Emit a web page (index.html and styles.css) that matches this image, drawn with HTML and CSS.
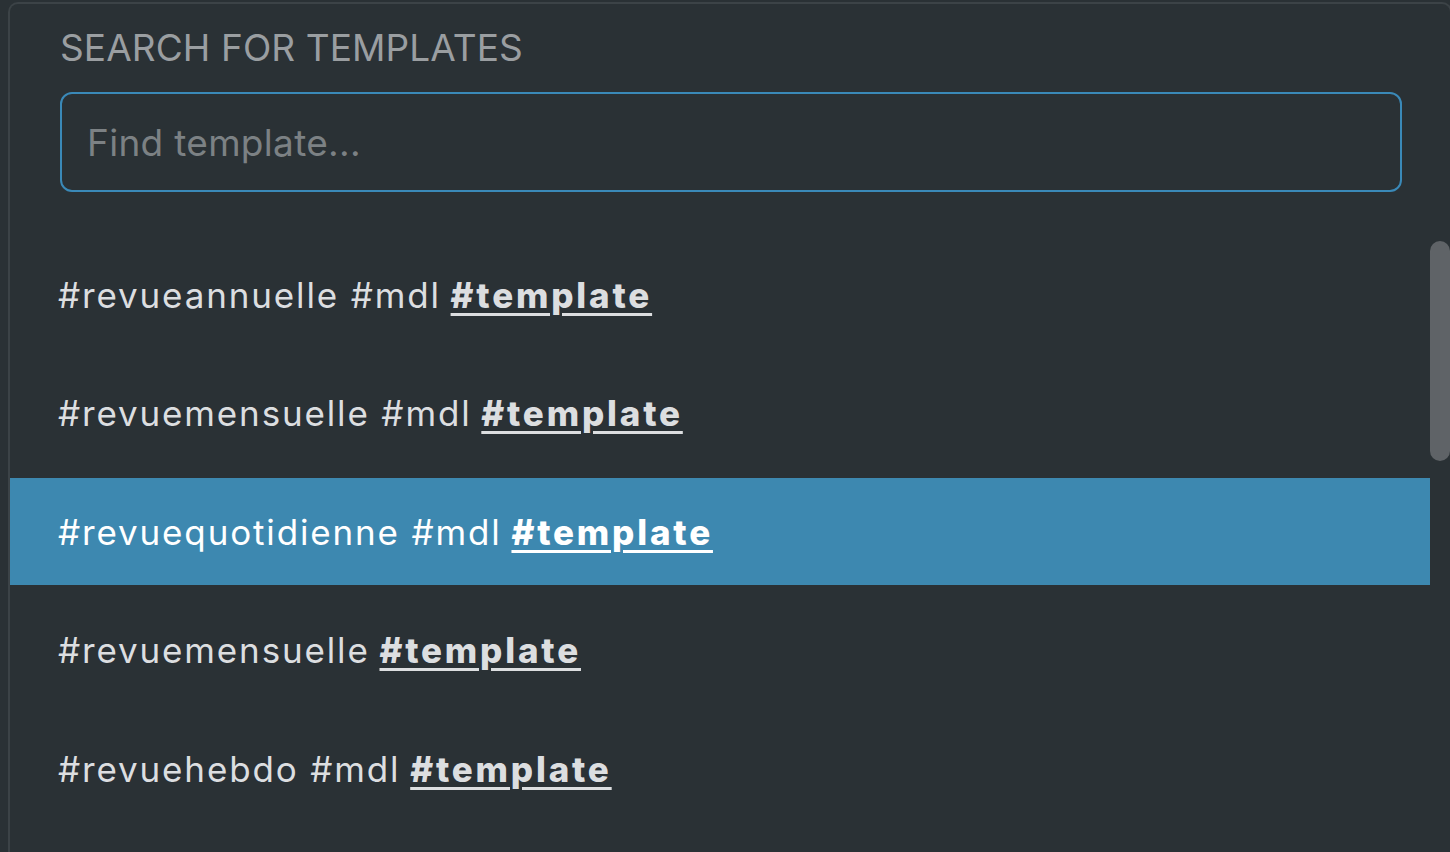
FILE: index.html
```html
<!DOCTYPE html>
<html>
<head>
<meta charset="utf-8">
<link rel="stylesheet" href="styles.css">
</head>
<body>
<div class="panel">
  <div class="header">
    <div class="title">SEARCH FOR TEMPLATES</div>
    <div class="search"><span class="placeholder">Find template...</span></div>
  </div>
  <div class="list">
    <div class="row">#revueannuelle #mdl <b>#template</b></div>
    <div class="row">#revuemensuelle #mdl <b>#template</b></div>
    <div class="row selected">#revuequotidienne #mdl <b>#template</b></div>
    <div class="row">#revuemensuelle <b>#template</b></div>
    <div class="row">#revuehebdo #mdl <b>#template</b></div>
    <div class="thumb"></div>
  </div>
</div>
</body>
</html>
```
FILE: styles.css
```css
html, body {
  margin: 0;
  padding: 0;
  background: #2a3135;
  overflow: hidden;
  height: 100%;
}
body {
  font-family: Inter, "Noto Sans", sans-serif;
}
.panel {
  margin: 2px 0 0 8px;
  width: 1444px;
  height: 900px;
  border: 2px solid #3c4347;
  border-bottom: none;
  border-radius: 10px 10px 0 0;
  background: #2a3135;
  box-sizing: border-box;
}
.header {
  padding: 0 0 0 50px;
}
.title {
  font-size: 37px;
  letter-spacing: 0.1px;
  color: #9a9ea1;
  line-height: 44px;
  padding-top: 22px;
}
.search {
  margin-top: 22px;
  height: 100px;
  width: 1342px;
  box-sizing: border-box;
  border: 2px solid #3a89b8;
  border-radius: 12px;
  display: flex;
  align-items: center;
  padding-left: 25px;
}
.placeholder {
  font-size: 37px;
  letter-spacing: 0.3px;
  color: #7c8184;
}
.list {
  position: relative;
  margin-top: 49px;
  display: flex;
  flex-direction: column;
  gap: 11.5px;
  padding-right: 20px;
}
.row {
  height: 107px;
  display: flex;
  align-items: center;
  padding-left: 48px;
  font-size: 35px;
  letter-spacing: 1.85px;
  color: #dcdee0;
}
.row b {
  font-weight: 800;
  letter-spacing: 2.8px;
  text-decoration: underline;
  text-underline-offset: 5px;
  text-decoration-thickness: 3px;
  margin-left: 0.28em;
}
.row.selected {
  background: #3d88b0;
  color: #ffffff;
}
.thumb {
  position: absolute;
  top: 0;
  right: 0;
  width: 20px;
  height: 220px;
  border-radius: 10px;
  background: #5f6367;
}
```
